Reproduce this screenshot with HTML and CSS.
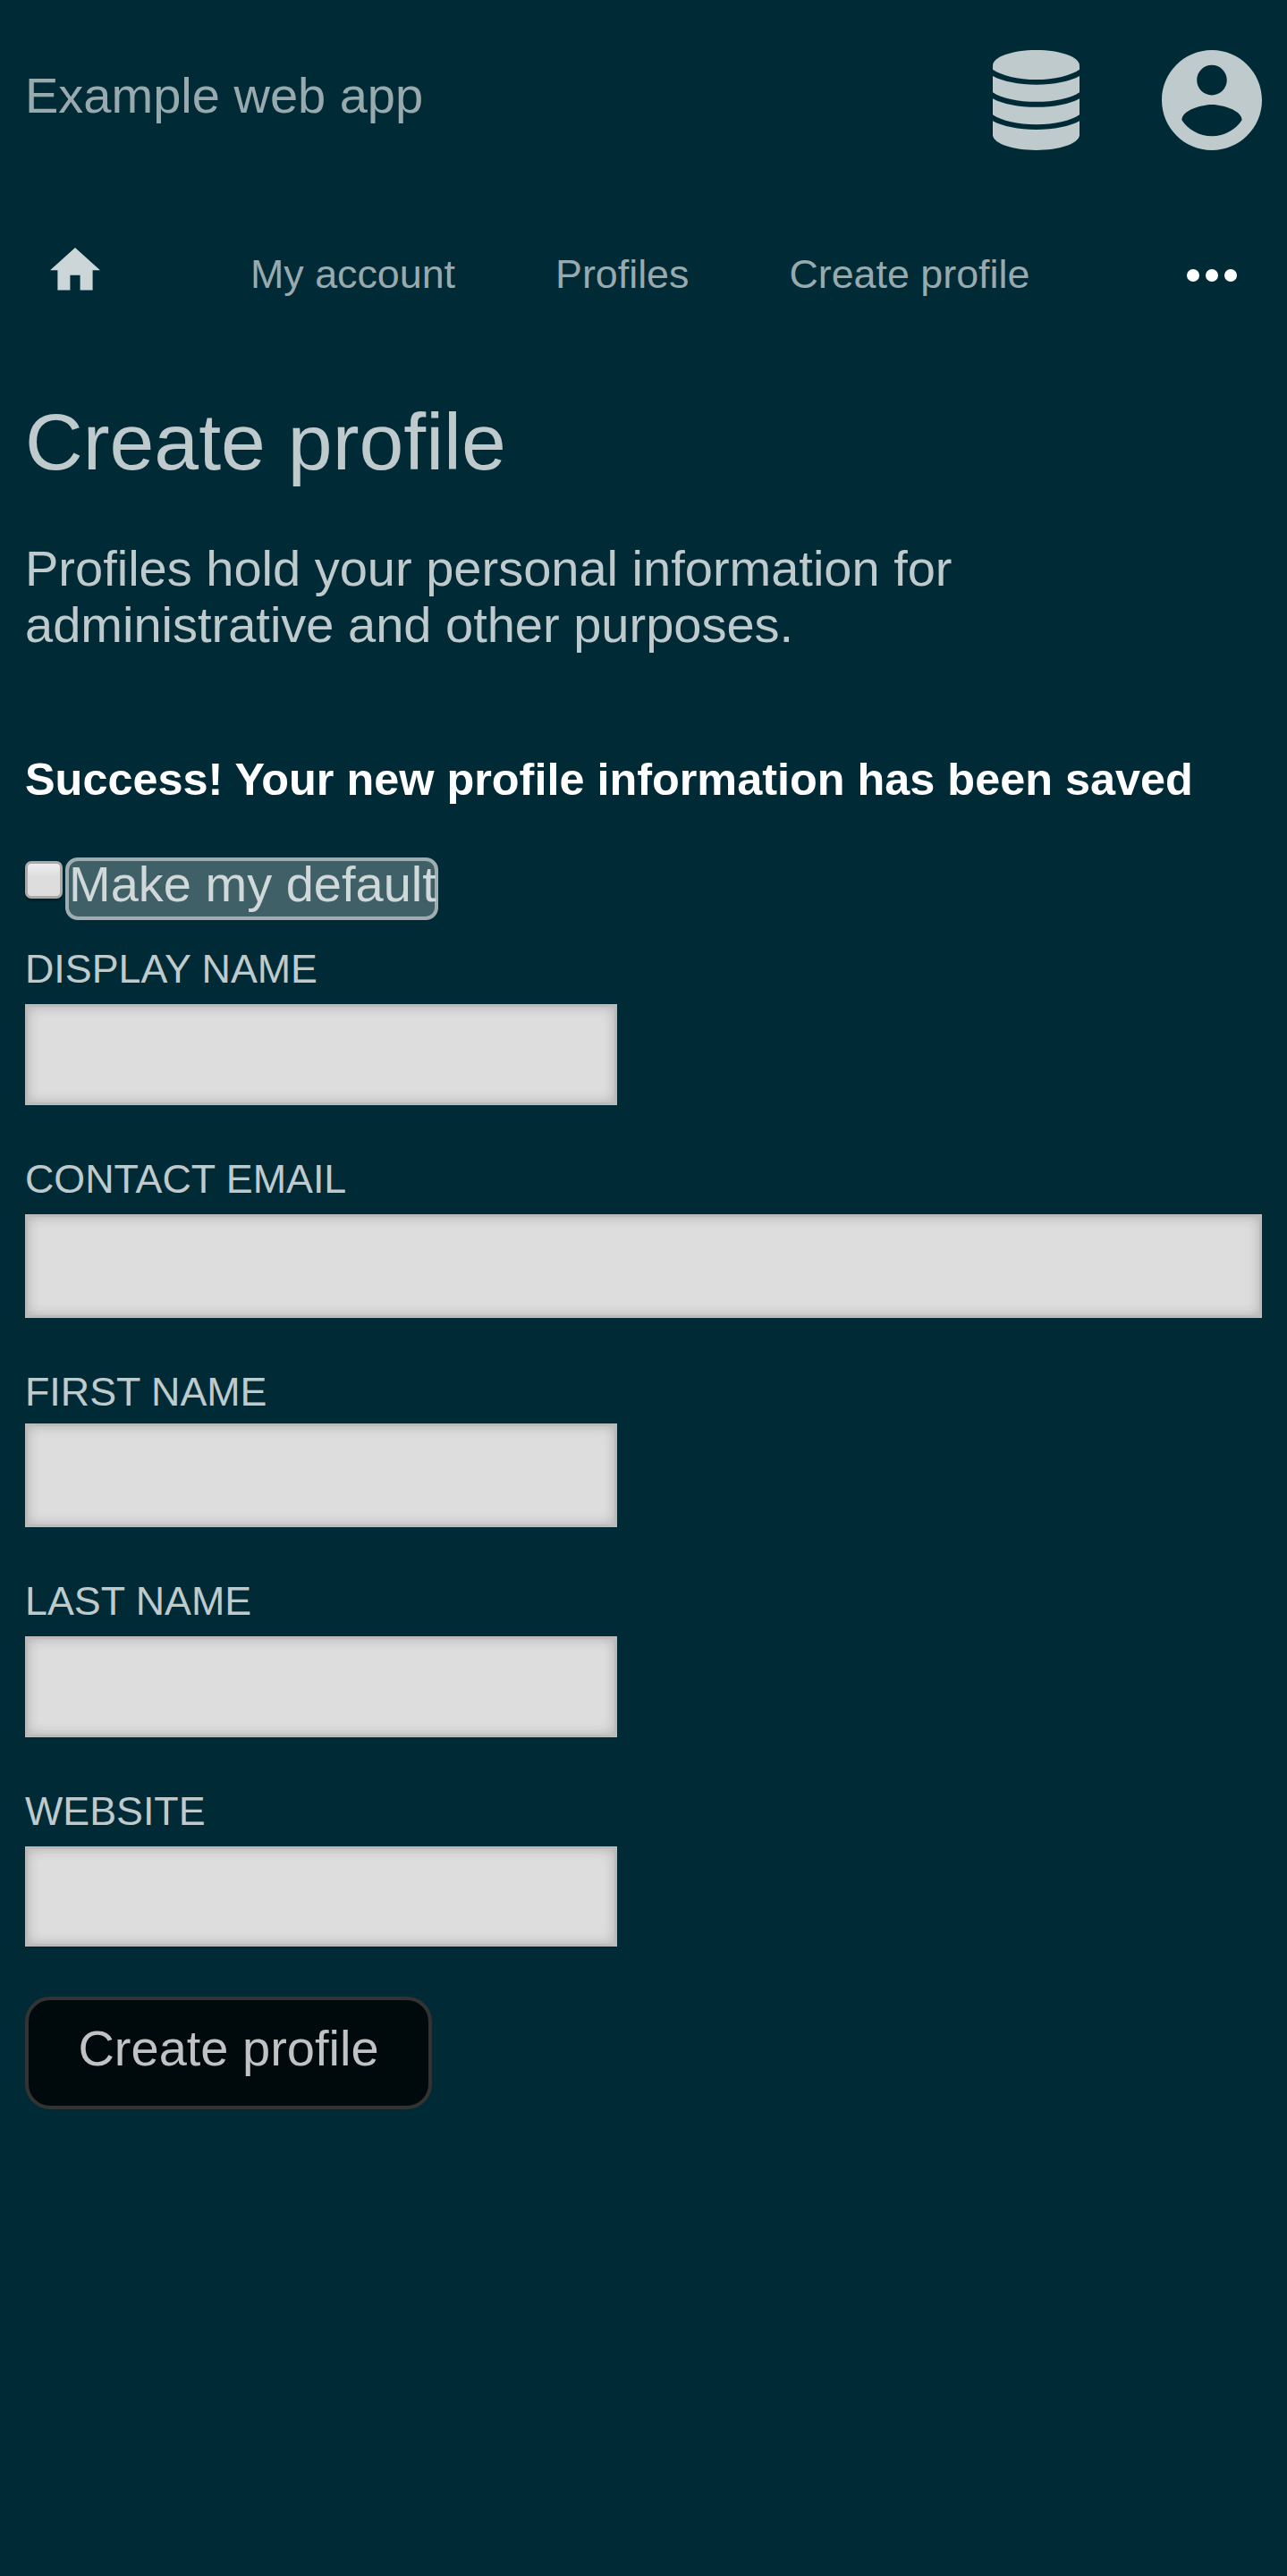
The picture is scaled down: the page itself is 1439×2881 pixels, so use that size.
FILE: index.html
```html
<!DOCTYPE html>
<html lang="en">
<head>
<meta charset="utf-8">
<title>Create profile</title>
<link rel="stylesheet" href="styles.css">
</head>
<body>
<header class="header">
  <a class="brand">Example web app</a>
  <div class="header-icons">
    <svg class="icon-db" viewBox="90 78 291 335" preserveAspectRatio="none" aria-label="Administrator">
      <path d="M236 78C317 78 381 101 381 130V143C352 163 297 177 236 177S119 163 90 143V130C90 101 155 78 236 78Z"/>
      <path d="M90 165C123 183 177 194 236 194S349 183 381 165V219C352 239 297 251 236 251S119 239 90 219Z"/>
      <path d="M90 240C123 258 177 269 236 269S349 258 381 240V294C352 314 297 327 236 327S119 314 90 294Z"/>
      <path d="M90 315C123 333 177 344 236 344S349 333 381 315V364C376 393 312 413 236 413S95 393 90 364Z"/>
    </svg>
    <svg class="icon-user" viewBox="2 2 20 20" aria-label="Account">
      <path d="M12 2C6.48 2 2 6.48 2 12s4.48 10 10 10 10-4.48 10-10S17.52 2 12 2zm0 3c1.66 0 3 1.34 3 3s-1.34 3-3 3-3-1.34-3-3 1.34-3 3-3zm0 14.2c-2.5 0-4.71-1.28-6-3.22.03-1.99 4-3.08 6-3.08 1.99 0 5.97 1.09 6 3.08-1.29 1.94-3.5 3.22-6 3.22z"/>
    </svg>
  </div>
</header>
<nav class="nav">
  <svg class="icon-home" viewBox="2 3 20 17" aria-label="Home"><path d="M10 20v-6h4v6h5v-8h3L12 3 2 12h3v8z"/></svg>
  <a class="nav-link">My account</a>
  <a class="nav-link">Profiles</a>
  <a class="nav-link">Create profile</a>
  <svg class="icon-more" viewBox="0 0 56 14" aria-label="More"><circle cx="7" cy="7" r="7"/><circle cx="28" cy="7" r="7"/><circle cx="49" cy="7" r="7"/></svg>
</nav>
<main class="main">
  <h1 class="heading">Create profile</h1>
  <p class="intro">Profiles hold your personal information for administrative and other purposes.</p>
  <p class="message">Success! Your new profile information has been saved</p>
  <form class="form">
    <div class="check-row">
      <input class="checkbox" type="checkbox" id="default">
      <label class="check-label" for="default">Make my default</label>
    </div>
    <div class="field">
      <label class="label" for="display">Display name</label>
      <input class="input" id="display" type="text">
    </div>
    <div class="field email">
      <label class="label" for="email">Contact email</label>
      <input class="input" id="email" type="text">
    </div>
    <div class="field first">
      <label class="label" for="first">First name</label>
      <input class="input" id="first" type="text">
    </div>
    <div class="field">
      <label class="label" for="last">Last name</label>
      <input class="input" id="last" type="text">
    </div>
    <div class="field website">
      <label class="label" for="website">Website</label>
      <input class="input" id="website" type="text">
    </div>
    <button class="button" type="button">Create profile</button>
  </form>
</main>
</body>
</html>
```
FILE: styles.css
```css
* { box-sizing: border-box; }
html { background: #002b36; }
body {
  margin: 0;
  min-height: 2881px;
  background: #002b36;
  color: #bfcacd;
  font: 56px/63px "Liberation Sans", Arial, sans-serif;
}
.header {
  display: flex;
  justify-content: space-between;
  align-items: flex-start;
  height: 224px;
  padding: 56px 28px;
}
.brand { padding-top: 19px; color: #99aaaf; }
.header-icons { display: flex; gap: 92px; fill: #bfcacd; }
.icon-db { width: 97px; height: 112px; }
.icon-user { width: 112px; height: 112px; }
.nav {
  display: flex;
  align-items: center;
  gap: 112px;
  height: 165px;
  padding: 0 56px;
}
.icon-home { width: 56px; height: 47.6px; margin: 0 56px 11px 0; fill: #ccd5d7; }
.nav-link { padding-bottom: 2px; color: #99aaaf; font-size: 44.8px; line-height: 50px; white-space: nowrap; }
.icon-more { width: 56px; height: 14px; margin: 3px 0 0 auto; fill: #fff; }
.main { padding: 55px 28px 0; }
.heading { margin: 0; font-size: 89.6px; line-height: 100px; font-weight: 400; }
.intro { margin: 60px 0 0; max-width: 1200px; }
.message {
  margin: 114px 0 0;
  color: #fff;
  font-size: 50.4px;
  line-height: 56px;
  font-weight: 700;
  white-space: nowrap;
}
.check-row {
  display: flex;
  align-items: flex-start;
  gap: 3px;
  margin: 59px 0 29px;
}
.checkbox {
  appearance: none;
  width: 42px;
  height: 42px;
  margin: 4px 0 0;
  border: 3px solid #aaa;
  border-radius: 7px;
  background: linear-gradient(#eee, #ddd 40%);
  box-shadow: 0 3px 3px rgba(0, 0, 0, .25);
}
.check-label {
  width: 417px;
  height: 70px;
  border: 4px solid #9fadb1;
  border-radius: 14px;
  background: #406067;
  color: #d0d8da;
  line-height: 51px;
  white-space: nowrap;
}
.field { display: flex; flex-direction: column; gap: 15px; margin-bottom: 57px; }
.label { font-size: 44.8px; line-height: 50px; text-transform: uppercase; }
.input {
  width: 662px;
  height: 113px;
  margin: 0;
  padding: 0 14px;
  border: 3px solid #bbb;
  background: #ddd;
  box-shadow: inset 0 0 14px rgba(0, 0, 0, .2);
  font: inherit;
}
.email .input { width: 100%; height: 116px; }
.first { gap: 11px; }
.first .input { height: 116px; }
.website { margin-bottom: 56px; }
.website .input { height: 112px; }
.button {
  display: block;
  width: 455px;
  height: 126px;
  padding: 0 0 11px;
  border: 4px solid #333;
  border-radius: 28px;
  background: #000a0c;
  color: #c0c2c3;
  font: inherit;
}
```
